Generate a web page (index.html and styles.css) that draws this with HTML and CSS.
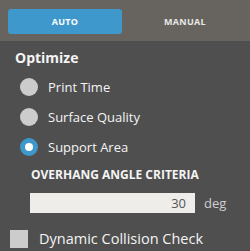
FILE: index.html
```html
<!DOCTYPE html>
<html lang="en">
<head>
    <meta charset="UTF-8">
    <title>Support Optimize</title>
    <link rel="stylesheet" href="styles.css">
</head>
<body>
    <div class="tabs">
        <div class="tab active">AUTO</div>
        <div class="tab">MANUAL</div>
    </div>
    <div class="panel">
        <h2 class="title">Optimize</h2>
        <div class="radio-row"><span class="radio"></span><span class="label">Print Time</span></div>
        <div class="radio-row"><span class="radio"></span><span class="label">Surface Quality</span></div>
        <div class="radio-row"><span class="radio checked"></span><span class="label">Support Area</span></div>
        <div class="sub-title">OVERHANG ANGLE CRITERIA</div>
        <div class="field-row">
            <div class="field">30</div>
            <span class="unit">deg</span>
        </div>
        <div class="check-row"><span class="check"></span><span class="label">Dynamic Collision Check</span></div>
    </div>
</body>
</html>
```

FILE: styles.css
```css
body {
    margin: 0;
    width: 250px;
    height: 251px;
    background-color: #4f4f4f;
    font-family: 'Open Sans', sans-serif;
    color: #f4f4f4;
    overflow: hidden;
}
.tabs {
    display: flex;
    gap: 6px;
    padding: 9px 8px 7px;
    background-color: #67645f;
}
.tab {
    width: 114px;
    height: 25px;
    border-radius: 3px;
    display: flex;
    align-items: center;
    justify-content: center;
    font-size: 9px;
    font-weight: bold;
    letter-spacing: 0.3px;
    color: #e8e8e8;
}
.tab.active {
    background-color: #3e98cc;
    color: #ffffff;
}
.panel {
    padding-left: 15px;
}
.title {
    margin: 0;
    height: 31px;
    padding-top: 5px;
    font-size: 14px;
    line-height: 24px;
    font-weight: bold;
    box-sizing: border-box;
}
.radio-row {
    display: flex;
    align-items: center;
    gap: 10px;
    height: 30px;
    padding-left: 5px;
}
.radio {
    width: 18px;
    height: 18px;
    border-radius: 50%;
    background-color: #cccccc;
    box-sizing: border-box;
}
.radio.checked {
    background-color: #ffffff;
    border: 5px solid #3e98cc;
}
.label {
    font-size: 13px;
}
.sub-title {
    margin-top: 5px;
    padding-left: 16px;
    font-size: 12px;
    font-weight: bold;
    height: 16px;
    line-height: 16px;
}
.field-row {
    display: flex;
    align-items: center;
    gap: 9px;
    margin-top: 10px;
    padding-left: 15px;
}
.field {
    width: 165px;
    height: 20px;
    box-sizing: border-box;
    background-color: #eeedea;
    color: #555555;
    font-size: 13px;
    line-height: 20px;
    text-align: right;
    padding-right: 9px;
}
.unit {
    font-size: 13px;
    color: #cfcfcf;
}
.check-row {
    display: flex;
    align-items: center;
    gap: 11px;
    margin-top: 16px;
    margin-left: -5px;
}
.check {
    width: 18px;
    height: 18px;
    background-color: #cccccc;
}
.check-row .label {
    font-size: 14.5px;
}
```
